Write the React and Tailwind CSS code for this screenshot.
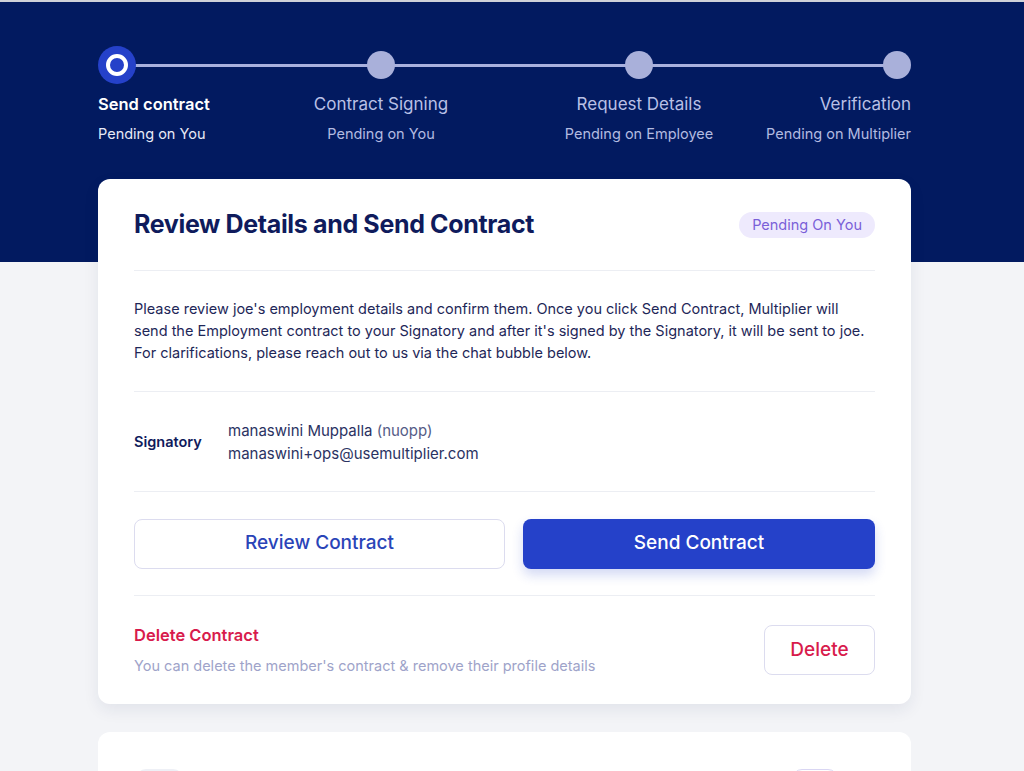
import React from "react";

const font = { fontFamily: "Inter, Lato, 'Open Sans', sans-serif" };

function Step({ title, sub, active, align, className }) {
  const alignCls =
    align === "start" ? "items-start text-left" : align === "end" ? "items-end text-right" : "items-center text-center";
  return (
    <div className={`flex flex-col ${alignCls} ${className}`}>
      <div className="h-[40px] flex items-center">
        {active ? (
          <div className="w-[38px] h-[38px] rounded-full bg-[#2541c9] flex items-center justify-center">
            <div className="w-[22px] h-[22px] rounded-full border-[4px] border-white" />
          </div>
        ) : (
          <div className="w-[28px] h-[28px] rounded-full bg-[#a9b0da]" />
        )}
      </div>
      <div
        className={`mt-[8px] whitespace-nowrap leading-[22px] ${
          active ? "text-[16.5px] font-semibold text-white" : "text-[17px] text-[#b9c0e6]"
        }`}
      >
        {title}
      </div>
      <div className={`mt-[9px] whitespace-nowrap text-[14.5px] leading-[20px] ${active ? "text-[#e8eaf6]" : "text-[#b3bbe0]"}`}>
        {sub}
      </div>
    </div>
  );
}

export default function App() {
  return (
    <div className="min-h-screen bg-[#f3f4f7] overflow-hidden" style={font}>
      <div className="h-[2px] bg-[#cfd2d9]" />
      <div className="h-[260px] bg-[#021a60]">
        <div className="relative ml-[98px] w-[813px] pt-[43px] flex">
          <div className="absolute left-[20px] right-[14px] top-[62px] h-[3px] bg-[#a9b1de]" />
          <Step className="relative w-[113px]" align="start" active title="Send contract" sub="Pending on You" />
          <Step className="relative w-[134px] ml-[103px]" title="Contract Signing" sub="Pending on You" />
          <Step className="relative w-[150px] ml-[116px]" title="Request Details" sub="Pending on Employee" />
          <Step className="relative w-[146px] ml-[51px]" align="end" title="Verification" sub="Pending on Multiplier" />
        </div>
      </div>

      <div className="ml-[98px] w-[813px] -mt-[83px] bg-white rounded-xl shadow-[0_6px_16px_rgba(30,40,90,0.08)] px-[36px]">
        <div className="h-[92px] flex items-center justify-between border-b border-[#eceef3]">
          <h1 className="text-[25px] font-bold text-[#0f1b5c] tracking-[-0.35px]">Review Details and Send Contract</h1>
          <span className="h-[26px] px-[13px] rounded-full bg-[#eeeafd] text-[#7a5fd8] text-[14.5px] flex items-center">
            Pending On You
          </span>
        </div>
        <div className="py-[27px] border-b border-[#eceef3] text-[14.5px] leading-[22px] text-[#1e2758]">
          Please review joe's employment details and confirm them. Once you click Send Contract, Multiplier will
          <br />
          send the Employment contract to your Signatory and after it's signed by the Signatory, it will be sent to joe.
          <br />
          For clarifications, please reach out to us via the chat bubble below.
        </div>
        <div className="h-[100px] flex items-center border-b border-[#eceef3]">
          <div className="w-[94px] text-[14.5px] font-semibold text-[#0f1b5c]">Signatory</div>
          <div className="text-[15px] leading-[23px] text-[#2a3262]">
            <div>
              manaswini Muppalla <span className="text-[#555c86]">(nuopp)</span>
            </div>
            <div>manaswini+ops@usemultiplier.com</div>
          </div>
        </div>
        <div className="h-[104px] flex items-center gap-[18px] border-b border-[#eceef3]">
          <button className="w-[371px] h-[50px] rounded-lg border border-[#dcdcef] bg-white text-[19px] font-medium text-[#2a44b8]">
            Review Contract
          </button>
          <button className="flex-1 h-[50px] rounded-lg bg-[#2541c9] text-[19px] font-medium text-white shadow-[0_6px_12px_rgba(37,65,201,0.2)]">
            Send Contract
          </button>
        </div>
        <div className="h-[108px] flex items-center justify-between">
          <div>
            <div className="text-[16.5px] leading-[20px] font-semibold text-[#d81b4c]">Delete Contract</div>
            <div className="mt-[11px] text-[14.5px] leading-[20px] text-[#9ea3c9]">
              You can delete the member's contract &amp; remove their profile details
            </div>
          </div>
          <button className="w-[111px] h-[50px] rounded-lg border border-[#dcdcef] bg-white text-[19px] font-medium text-[#d81b4c]">
            Delete
          </button>
        </div>
      </div>

      <div className="ml-[98px] w-[813px] mt-[28px] h-[120px] bg-white rounded-xl px-[38px] pt-[37px] flex justify-between">
        <div className="w-[47px] h-[20px] rounded-full bg-[#eef0f6]" />
        <div className="w-[46px] h-[20px] rounded-full border border-[#d9d6f3] mr-[35px]" />
      </div>
    </div>
  );
}
